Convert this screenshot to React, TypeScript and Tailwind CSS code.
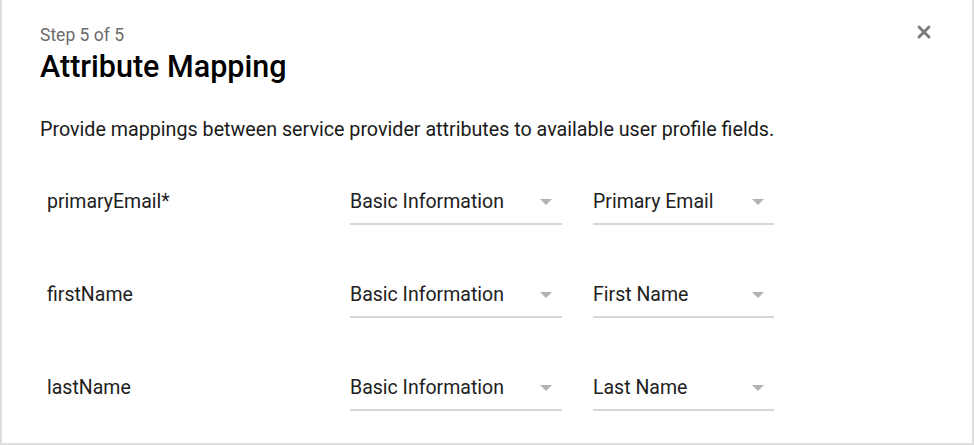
import { X } from "lucide-react"

const rows = [
  { name: "primaryEmail*", group: "Basic Information", field: "Primary Email" },
  { name: "firstName", group: "Basic Information", field: "First Name" },
  { name: "lastName", group: "Basic Information", field: "Last Name" },
]

function Select({ value, width }: { value: string; width: string }) {
  return (
    <div className={`${width} flex items-center justify-between border-b-2 border-[#d6d6d6] pb-[9px]`}>
      <span className="text-[19.5px] leading-[24px] text-[#212121]">{value}</span>
      <span className="mr-[10px] h-0 w-0 border-x-[6px] border-t-[6px] border-x-transparent border-t-[#b3b3b3]" />
    </div>
  )
}

export default function App() {
  return (
    <div className="h-[445px] w-[974px] bg-white font-['Roboto',sans-serif]">
      <div className="relative h-[445px] w-[974px] border-x-2 border-b-2 border-[#dedede] px-[38px] pt-[24px]">
        <button className="absolute right-[38px] top-[22px] text-[#7a7a7a]">
          <X className="h-[20px] w-[20px]" strokeWidth={3.4} />
        </button>
        <div className="text-[17.5px] leading-[22px] text-[#6b6b6b]">Step 5 of 5</div>
        <h1 className="mt-[3px] text-[30.5px] font-medium leading-[36px] text-black">Attribute Mapping</h1>
        <p className="mt-[33px] text-[19.7px] leading-[24px] text-[#1a1a1a]">
          Provide mappings between service provider attributes to available user profile fields.
        </p>
        <div className="mt-[48px] flex flex-col gap-[58px]">
          {rows.map((row) => (
            <div key={row.name} className="flex items-start">
              <div className="w-[310px] pl-[7px] text-[19.5px] leading-[24px] text-[#212121]">{row.name}</div>
              <Select value={row.group} width="w-[212px]" />
              <div className="w-[31px]" />
              <Select value={row.field} width="w-[181px]" />
            </div>
          ))}
        </div>
      </div>
    </div>
  )
}
